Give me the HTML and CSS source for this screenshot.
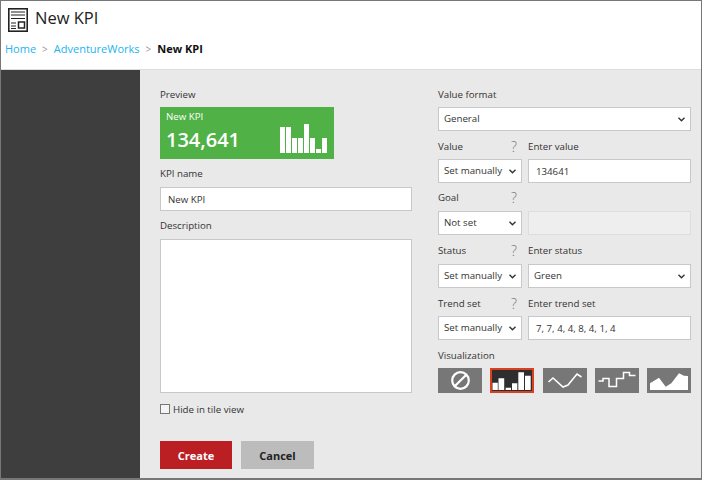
FILE: index.html
```html
<!DOCTYPE html>
<html lang="en">
<head>
    <meta charset="UTF-8">
    <meta name="viewport" content="width=device-width, initial-scale=1.0">
    <title>New KPI</title>
    <link rel="stylesheet" href="styles.css">
</head>
<body>
    <div class="frame">
        <header class="header">
            <div class="title-row">
                <svg class="page-icon" width="20" height="24" viewBox="0 0 20 24">
                    <rect x="0.8" y="0.8" width="18.4" height="22.400" fill="#fff" stroke="#222" stroke-width="1.6"/>
                    <path d="M3 4h14M3 7h14M3 10.500h14M3 15h5M3 18h5M3 20.500h5" stroke="#222" stroke-width="1.2" fill="none"/>
                    <rect x="10.500" y="14" width="6" height="6" fill="none" stroke="#222" stroke-width="1.5"/>
                </svg>
                <h1 class="page-title">New KPI</h1>
            </div>
            <nav class="crumbs">
                <a class="crumb-link">Home</a>
                <span class="crumb-sep">&gt;</span>
                <a class="crumb-link">AdventureWorks</a>
                <span class="crumb-sep">&gt;</span>
                <b class="crumb-current">New KPI</b>
            </nav>
        </header>

        <div class="body-row">
            <aside class="sidebar"></aside>

            <main class="content">
                <div class="columns">
                    <section class="col-left">
                        <div class="label label-first">Preview</div>
                        <div class="tile">
                            <div class="tile-name">New KPI</div>
                            <div class="tile-row">
                                <span class="tile-value">134,641</span>
                                <div class="tile-bars">
                                    <i class="bar" style="height: 26px"></i>
                                    <i class="bar" style="height: 26px"></i>
                                    <i class="bar" style="height: 15px"></i>
                                    <i class="bar" style="height: 15px"></i>
                                    <i class="bar" style="height: 29px"></i>
                                    <i class="bar" style="height: 15px"></i>
                                    <i class="bar" style="height: 4px"></i>
                                    <i class="bar" style="height: 15px"></i>
                                </div>
                            </div>
                        </div>

                        <label class="label label-name">KPI name</label>
                        <input class="field" type="text" value="New KPI">

                        <label class="label label-desc">Description</label>
                        <textarea class="field field-area"></textarea>

                        <div class="check-row">
                            <span class="checkbox"></span>
                            <span>Hide in tile view</span>
                        </div>
                    </section>

                    <section class="col-right">
                        <div class="label label-first">Value format</div>
                        <div class="field select">
                            <span>General</span>
                            <svg class="chev" width="7" height="5" viewBox="0 0 7 5"><path d="M0.500 0.800l3 3 3-3" fill="none" stroke="#333" stroke-width="1.4"/></svg>
                        </div>

                        <div class="pair">
                            <div class="label-split"><span>Value</span><span class="help">?</span></div>
                            <div class="label">Enter value</div>
                            <div class="field select">
                                <span>Set manually</span>
                                <svg class="chev" width="7" height="5" viewBox="0 0 7 5"><path d="M0.500 0.800l3 3 3-3" fill="none" stroke="#333" stroke-width="1.4"/></svg>
                            </div>
                            <input class="field" type="text" value="134641">
                        </div>

                        <div class="pair pair-goal">
                            <div class="label-split"><span>Goal</span><span class="help">?</span></div>
                            <div class="label"></div>
                            <div class="field select">
                                <span>Not set</span>
                                <svg class="chev" width="7" height="5" viewBox="0 0 7 5"><path d="M0.500 0.800l3 3 3-3" fill="none" stroke="#333" stroke-width="1.4"/></svg>
                            </div>
                            <input class="field field-off" type="text" disabled>
                        </div>

                        <div class="pair pair-status">
                            <div class="label-split"><span>Status</span><span class="help">?</span></div>
                            <div class="label">Enter status</div>
                            <div class="field select">
                                <span>Set manually</span>
                                <svg class="chev" width="7" height="5" viewBox="0 0 7 5"><path d="M0.500 0.800l3 3 3-3" fill="none" stroke="#333" stroke-width="1.4"/></svg>
                            </div>
                            <div class="field select">
                                <span>Green</span>
                                <svg class="chev" width="7" height="5" viewBox="0 0 7 5"><path d="M0.500 0.800l3 3 3-3" fill="none" stroke="#333" stroke-width="1.4"/></svg>
                            </div>
                        </div>

                        <div class="pair">
                            <div class="label-split"><span>Trend set</span><span class="help">?</span></div>
                            <div class="label">Enter trend set</div>
                            <div class="field select">
                                <span>Set manually</span>
                                <svg class="chev" width="7" height="5" viewBox="0 0 7 5"><path d="M0.500 0.800l3 3 3-3" fill="none" stroke="#333" stroke-width="1.4"/></svg>
                            </div>
                            <input class="field" type="text" value="7, 7, 4, 4, 8, 4, 1, 4">
                        </div>

                        <div class="label label-viz">Visualization</div>
                        <div class="viz-row">
                            <div class="viz">
                                <svg width="44" height="25" viewBox="0 0 44 25">
                                    <circle cx="22.500" cy="12.500" r="8.300" fill="none" stroke="#fff" stroke-width="2.200"/>
                                    <path d="M16.700 18.300L28.300 6.700" stroke="#fff" stroke-width="2.200"/>
                                </svg>
                            </div>
                            <div class="viz viz-on">
                                <svg width="44" height="25" viewBox="0 0 44 25">
                                    <path d="M2.500 22v-7.300h5.300V22zM8.500 22V10.300h5.700V22zM15.700 22v-2.300H21V22zM22 22v-6.700h5.300V22zM28.300 22V4.300H34V22zM35 22V7.700h5.700V22z" fill="#fff"/>
                                </svg>
                            </div>
                            <div class="viz">
                                <svg width="44" height="25" viewBox="0 0 44 25">
                                    <path d="M5.500 14L10 10l10 9 5-2 9-11 4.500 3" fill="none" stroke="#fff" stroke-width="1.600"/>
                                </svg>
                            </div>
                            <div class="viz">
                                <svg width="44" height="25" viewBox="0 0 44 25">
                                    <path d="M3.500 13H8v-2.500h6v8h7.500v-8h7v-6h6v3h6" fill="none" stroke="#fff" stroke-width="1.500"/>
                                </svg>
                            </div>
                            <div class="viz">
                                <svg width="44" height="25" viewBox="0 0 44 25">
                                    <path d="M3 22v-6.700l9-5.600 6.700 9 5.600-3.400L32 5.300l5 2.400 4 .3v14z" fill="#fff"/>
                                </svg>
                            </div>
                        </div>
                    </section>
                </div>

                <div class="actions">
                    <button class="btn btn-create">Create</button>
                    <button class="btn btn-cancel">Cancel</button>
                </div>
            </main>
        </div>
    </div>
</body>
</html>
```

FILE: styles.css
```css
* {
    box-sizing: border-box;
}

html, body {
    margin: 0;
    height: 100%;
}

body {
    font-family: "Open Sans", "Noto Sans", Arial, sans-serif;
    font-size: 9.7px;
    color: #333;
    overflow: hidden;
}

.frame {
    width: 702px;
    height: 480px;
    border: 1px solid #777;
    border-bottom-width: 2px;
    display: flex;
    flex-direction: column;
    background-color: #fff;
}

/* header */
.header {
    height: 69px;
    padding: 7px 0 0 7px;
    flex: none;
    border-bottom: 1px solid #ddd;
}

.title-row {
    display: flex;
    align-items: flex-start;
    gap: 7px;
    height: 24px;
}

.page-title {
    margin: 0;
    font-size: 16.500px;
    line-height: 20px;
    font-weight: 400;
    color: #222;
}

.crumbs {
    margin: 9px 0 0 -3px;
    display: flex;
    align-items: center;
    gap: 6px;
    font-size: 11px;
    line-height: 16px;
}

.crumb-link {
    color: #1cb4f0;
}

.crumb-sep {
    color: #999;
    font-size: 10px;
}

.crumb-current {
    color: #111;
    font-size: 11px;
}

/* body */
.body-row {
    flex: 1;
    display: flex;
    min-height: 0;
}

.sidebar {
    width: 139px;
    flex: none;
    background-color: #3e3e3e;
}

.content {
    flex: 1;
    background-color: #e9e9e9;
    padding: 0 10px 0 20px;
}

.columns {
    display: flex;
    gap: 26px;
}

.col-left {
    width: 252px;
}

.col-right {
    width: 253px;
}

.label {
    height: 14px;
    line-height: 14px;
    color: #333;
}

.label-first {
    margin-top: 18px;
    margin-bottom: 5px;
}

.label-name {
    display: block;
    margin-top: 8px;
    margin-bottom: 6px;
}

.label-desc {
    display: block;
    margin-top: 8px;
    margin-bottom: 6px;
}

.label-viz {
    margin-top: 9px;
    margin-bottom: 5px;
}

.label-split {
    height: 14px;
    line-height: 14px;
    display: flex;
    justify-content: space-between;
    padding-right: 5px;
}

.help {
    color: #777;
    font-size: 14px;
    font-weight: 300;
}

/* preview tile */
.tile {
    width: 174px;
    height: 52px;
    background-color: #50b146;
    color: #fff;
    padding: 3px 7px 0 6px;
}

.tile-name {
    line-height: 14px;
}

.tile-row {
    display: flex;
    justify-content: space-between;
    align-items: flex-end;
}

.tile-value {
    font-size: 20px;
    font-weight: 600;
    line-height: 26px;
}

.tile-bars {
    display: flex;
    align-items: flex-end;
    gap: 1px;
}

.bar {
    width: 5px;
    background-color: #fff;
}

/* form fields */
.field {
    display: block;
    width: 100%;
    height: 24px;
    border: 1px solid #c8c8c8;
    background-color: #fff;
    font: inherit;
    color: #333;
    padding: 0 7px;
    outline: none;
}

.field-area {
    height: 154px;
    resize: none;
}

.field-off {
    background-color: #eee;
    border-color: #ddd;
}

.select {
    display: flex;
    align-items: center;
    justify-content: space-between;
    padding: 0 5px;
    line-height: 22px;
}

.pair {
    display: grid;
    grid-template-columns: 84px 163px;
    grid-template-rows: 14px 24px;
    column-gap: 6px;
    row-gap: 5px;
    margin-top: 9px;
}

.pair-goal {
    margin-top: 8px;
    row-gap: 6px;
}

.pair-status {
    row-gap: 6px;
}

.check-row {
    display: flex;
    align-items: center;
    gap: 3px;
    margin-top: 9px;
    height: 14px;
}

.checkbox {
    width: 10px;
    height: 10px;
    border: 1px solid #777;
    background-color: #f4f4f4;
}

/* visualization buttons */
.viz-row {
    display: flex;
    justify-content: space-between;
}

.viz {
    width: 44px;
    height: 25px;
    background-color: #777;
}

.viz svg {
    display: block;
}

.viz-on {
    background-color: #2e2e2e;
    outline: 2px solid #d9401f;
    outline-offset: -2px;
}

/* buttons */
.actions {
    display: flex;
    gap: 9px;
    margin-top: 25px;
}

.btn {
    height: 28px;
    width: 73px;
    border: none;
    font: inherit;
    font-weight: 700;
    font-size: 11px;
}

.btn-create {
    width: 72px;
    background-color: #bb1f23;
    color: #fff;
}

.btn-cancel {
    background-color: #bcbcbc;
    color: #222;
}
```
